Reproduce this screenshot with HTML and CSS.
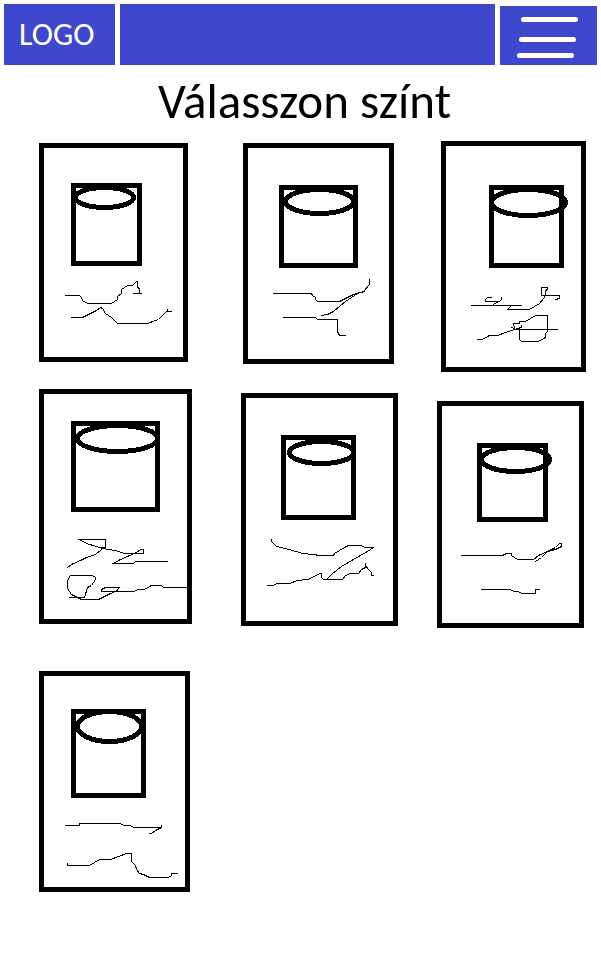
FILE: index.html
```html
<!DOCTYPE html>
<html lang="hu">
<head>
<meta charset="utf-8">
<meta name="viewport" content="width=device-width, initial-scale=1">
<title>Válasszon színt</title>
<link rel="stylesheet" href="styles.css">
</head>
<body>
<header class="topbar">
  <a class="logo" href="#">LOGO</a>
  <div class="banner"></div>
  <button class="menu" type="button" aria-label="Menü">
    <svg class="menu-icon" viewBox="0 0 97 59" aria-hidden="true">
      <path d="M23.5 13.5H75.5M21.5 33.5H73.5M19.5 49.5H71.5"/>
    </svg>
  </button>
</header>
<main>
  <h1 class="title">Válasszon színt</h1>
  <div class="colors">
    <button class="card" type="button" aria-label="1. szín">
      <svg class="sketch" viewBox="0 125 200 260">
        <g transform="translate(30.5 136.5)">
          <g class="thick"><rect x="11" y="9" width="144" height="214"/><rect x="43" y="49" width="66" height="78"/><ellipse cx="74" cy="61" rx="29" ry="10"/></g>
          <polyline points="35,159 49,159 51,161 52,164 57,167 81,167 87,163 87,160 91,157 91,153 97,149 102,149 106,145 107,145 107,151 109,152 109,157"/>
          <polyline points="103,157 111,157"/>
          <polyline points="41,181 52,181 66,174 70,171 72,172 75,177 81,181 87,187 117,187 128,183 136,175 141,175"/>
          <polyline points="137,173 137,175"/>
        </g>
      </svg>
    </button>
    <button class="card" type="button" aria-label="2. szín">
      <svg class="sketch" viewBox="200 125 200 260">
        <g transform="translate(235.5 136.5)">
          <g class="thick"><rect x="10" y="9" width="146" height="216"/><rect x="46" y="51" width="74" height="78"/><ellipse cx="84" cy="65" rx="34" ry="12"/></g>
          <polyline points="38,157 76,157 77,159 80,161 80,163 82,165 104,165 118,158 128,155 134,148 134,143"/>
          <polyline points="130,152 129,155 122,157 110,165 98,175 92,178 86,179"/>
          <polyline points="48,181 80,181 82,183 102,183 102,195 104,199 110,199"/>
        </g>
      </svg>
    </button>
    <button class="card" type="button" aria-label="3. szín">
      <svg class="sketch" viewBox="400 125 200 260">
        <g transform="translate(431.5 136.5)">
          <g class="thick"><rect x="12" y="7" width="140" height="226"/><rect x="60" y="51" width="70" height="78"/><ellipse cx="97" cy="66" rx="37" ry="13"/></g>
          <polyline points="60,161 56,161 54,163 54,165 68,165 70,163 70,161"/>
          <polyline points="67,165 62,168"/>
          <polyline points="40,169 90,169"/>
          <polyline points="79,170 76,173 98,173 108,167 113,161 113,159 128,159 128,162 124,163"/>
          <polyline points="113,159 110,159 110,151 116,151 116,153 114,154 114,159"/>
          <polyline points="46,203 51,203 58,199 66,199 77,195 86,192 90,191 90,189"/>
          <polyline points="80,191 83,192 82,187 88,187 88,185 94,185 104,179 116,179 116,195 114,197 114,201 107,205 90,205 88,203 88,193"/>
          <polyline points="82,193 126,193"/>
        </g>
      </svg>
    </button>
    <button class="card" type="button" aria-label="4. szín">
      <svg class="sketch" viewBox="0 385 200 260">
        <g transform="translate(30.5 380.5)">
          <g class="thick"><rect x="11" y="11" width="148" height="230"/><rect x="43" y="43" width="84" height="86"/><ellipse cx="87" cy="58" rx="40" ry="13"/></g>
          <polyline points="37,187 41,184 50,180 56,177 65,174 71,169 71,167"/>
          <polyline points="71,167 75,167 75,159 49,159 56,163 66,166 72,168 85,170 94,173 113,173 113,169 110,169 106,172 90,179 83,183 103,183 105,181 137,181"/>
          <polyline points="39,217 54,217 57,207 61,205 65,199 65,197 62,195 40,195 37,200 37,208 41,214 51,219 68,219 80,213 87,210 88,207"/>
          <polyline points="89,207 75,207 71,209 71,211 104,211 107,209 114,209 121,205 131,205 133,207 157,207"/>
        </g>
      </svg>
    </button>
    <button class="card" type="button" aria-label="5. szín">
      <svg class="sketch" viewBox="200 385 200 260">
        <g transform="translate(235.5 385.5)">
          <g class="thick"><rect x="8" y="10" width="152" height="228"/><rect x="48" y="52" width="70" height="80"/><ellipse cx="86" cy="67" rx="32" ry="11"/></g>
          <polyline points="36,154 36,156 41,161 54,164 67,168 78,169 84,170 98,170 99,168 104,165 111,161 113,160 125,160 130,162 138,162 132,166 118,174 106,181 97,188 92,193"/>
          <polyline points="32,200 37,200 42,198 54,198 62,195 72,194 79,191 84,188 86,188 86,192 88,194 107,194 110,190 115,188 123,188 126,184 130,182 130,178"/>
          <polyline points="130,180 133,184 136,187 136,190 138,190"/>
        </g>
      </svg>
    </button>
    <button class="card" type="button" aria-label="6. szín">
      <svg class="sketch" viewBox="400 385 200 260">
        <g transform="translate(431.5 395.5)">
          <g class="thick"><rect x="8" y="8" width="142" height="222"/><rect x="48" y="50" width="66" height="74"/><ellipse cx="84" cy="64" rx="34" ry="12"/></g>
          <polyline points="30,160 71,160 75,158 80,158 80,160 86,164 102,164 107,160 116,156 124,152 128,148 130,148 130,151 124,154 116,156 110,162 104,166"/>
          <polyline points="50,194 79,194 82,196 87,196 90,198 104,198 104,194 108,194"/>
        </g>
      </svg>
    </button>
    <button class="card" type="button" aria-label="7. szín">
      <svg class="sketch" viewBox="0 645 200 260">
        <g transform="translate(30.5 665.5)">
          <g class="thick"><rect x="11" y="8" width="146" height="216"/><rect x="43" y="46" width="70" height="84"/><ellipse cx="79" cy="61" rx="32" ry="15"/></g>
          <polyline points="35,160 49,160 49,158 90,158 93,160 99,160 104,162 131,162 131,160"/>
          <polyline points="131,162 125,165 121,168 119,168"/>
          <polyline points="37,198 37,200 59,200 64,197 69,194 80,194 88,191 96,188 101,188 101,196 105,200 106,204 109,208 113,209 119,212 138,212 141,210 141,208 147,208"/>
        </g>
      </svg>
    </button>
  </div>
</main>
</body>
</html>
```
FILE: styles.css
```css
* {
  box-sizing: border-box;
}

body {
  margin: 0;
  background: #fff;
  color: #000;
  font-family: Carlito, Lato, sans-serif;
}

.topbar {
  display: grid;
  grid-template-columns: 111px 1fr 97px;
  gap: 5px;
  padding: 4px 4px 0;
}

.logo,
.banner,
.menu {
  background: #3f48cc;
}

.logo {
  height: 61px;
  padding-left: 15px;
  color: #fff;
  font-size: 32px;
  line-height: 61px;
  text-decoration: none;
}

.menu {
  align-self: end;
  height: 59px;
  padding: 0;
  border: 0;
  cursor: pointer;
}

.menu-icon {
  display: block;
  width: 97px;
  height: 59px;
  fill: none;
  stroke: #fff;
  stroke-width: 5;
  stroke-linecap: round;
}

.title {
  margin: 0;
  padding: 12px 0 0 8px;
  font-size: 49px;
  font-weight: 400;
  line-height: 48px;
  text-align: center;
}

.colors {
  display: grid;
  grid-template-columns: repeat(auto-fill, 200px);
}

.card {
  padding: 0;
  border: 0;
  background: none;
  cursor: pointer;
}

.sketch {
  display: block;
  width: 200px;
  height: 260px;
  fill: none;
  stroke: #000;
  stroke-width: 1;
  stroke-linecap: square;
  shape-rendering: crispEdges;
}

.thick {
  stroke-width: 5;
}
```
